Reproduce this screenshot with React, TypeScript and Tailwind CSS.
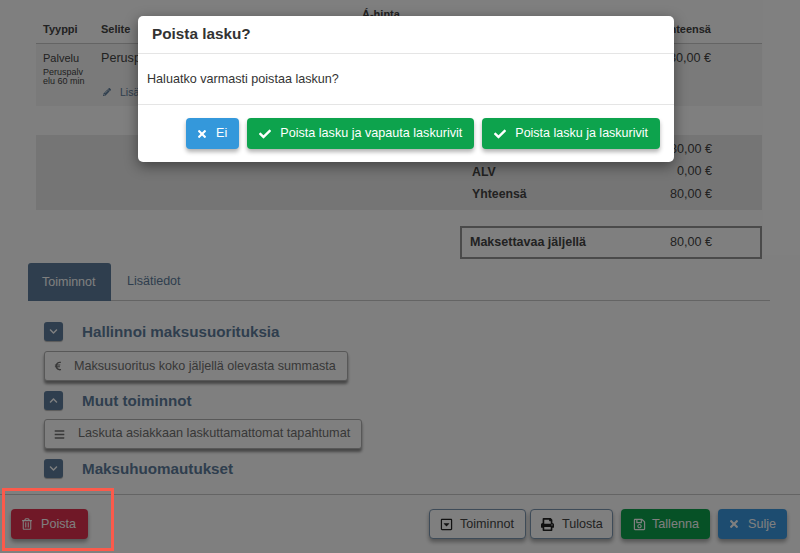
import { FaTimes, FaCheck, FaPencilAlt, FaRegTrashAlt, FaRegSave, FaPrint, FaEuroSign, FaBars, FaChevronDown, FaChevronUp, FaRegCaretSquareDown } from "react-icons/fa";
import type { ReactNode } from "react";

function Section({ icon, title }: { icon: ReactNode; title: string }) {
  return (
    <div className="flex items-center h-[19px]">
      <span className="w-[19px] h-[19px] rounded-[3px] bg-[#5e7d9c] text-white flex items-center justify-center shadow-[0_1px_1px_rgba(0,0,0,0.3)]">{icon}</span>
      <h3 className="ml-[19px] text-[#5e7d9c] text-[15.2px] font-bold leading-[19px]">{title}</h3>
    </div>
  );
}

function ActionButton({ icon, label, slot, size }: { icon: ReactNode; label: string; slot: string; size: string }) {
  return (
    <div className={`h-[30px] self-start flex items-center pl-[9px] pr-[11px] border border-[#b0b0b0] rounded-[3px] bg-white text-[#707070] shadow-[0_3px_3px_rgba(0,0,0,0.45)] ${size}`}>
      <span className={`flex justify-start ${slot}`}>{icon}</span>
      <span className="ml-[12px]">{label}</span>
    </div>
  );
}

function ModalButton({ icon, label, cls, gap, size }: { icon: ReactNode; label: string; cls: string; gap: string; size: string }) {
  return (
    <div className={`h-[31px] flex items-center px-[12px] ${gap} ${size} rounded-[4px] text-white shadow-[0_3px_4px_rgba(0,0,0,0.3)] ${cls}`}>
      {icon}
      <span>{label}</span>
    </div>
  );
}

export default function App() {
  return (
    <div className="relative w-[800px] h-[553px] overflow-hidden bg-white text-[#444] font-['Liberation_Sans',Arial,sans-serif]">
      {/* page */}
      <div className="h-full flex flex-col">
        <div className="ml-[36px] mr-[38px] shrink-0">
          <div className="h-[44px] border-b border-[#c8c8c8] flex text-[11px] font-bold">
            <span className="w-[58px] ml-[7px] mt-[22px] leading-[14px]">Tyyppi</span>
            <span className="w-[261px] mt-[22px] leading-[14px]">Selite</span>
            <span className="mt-[7px] leading-[14px]">Á-hinta</span>
            <span className="ml-auto mr-[51px] mt-[22px] leading-[14px]">Yhteensä</span>
          </div>
          <div className="h-[62px] bg-[#f4f4f4] flex">
            <div className="w-[58px] ml-[7px] pt-[7px]">
              <div className="text-[11px] leading-[14px]">Palvelu</div>
              <div className="text-[9px] leading-[9px] mt-[3px] w-[42px] break-all">Peruspalv elu 60 min</div>
            </div>
            <div className="pt-[7px]">
              <div className="text-[12.6px] leading-[15px]">Peruspalvelu</div>
              <div className="flex items-center gap-[9px] ml-[2px] mt-[20px] text-[#5e7d9c] text-[10.5px] leading-[12px]">
                <FaPencilAlt className="w-[8px] h-[8px] text-[#5e7d9c]" />
                <span>Lisää</span>
              </div>
            </div>
            <div className="ml-auto mr-[51px] pt-[7px] text-[12.6px] leading-[15px]">80,00 €</div>
          </div>
          <div className="h-[75px] mt-[29px] bg-[#eaeaea] text-[12.6px] pt-[3px]">
            {[["", "80,00 €"], ["ALV", "0,00 €"], ["Yhteensä", "80,00 €"]].map(([k, v]) => (
              <div key={v + k} className="h-[22.5px] flex items-center pl-[436px] pr-[50px] justify-between">
                <b className="font-bold text-[12.3px]">{k}</b>
                <span>{v}</span>
              </div>
            ))}
          </div>
          <div className="ml-[424px] mt-[16px] h-[33px] border-2 border-[#949494] flex items-center justify-between pl-[8px] pr-[48px] text-[12.6px]">
            <b className="text-[12.5px]">Maksettavaa jäljellä</b>
            <span>80,00 €</span>
          </div>
        </div>

        <div className="ml-[28px] mr-[30px] mt-[4px] h-[38px] border-b border-[#c8c8c8] flex text-[12.5px] shrink-0">
          <div className="w-[83px] h-[38px] bg-[#5e7d9c] text-white rounded-t-[3px] flex items-center pl-[14px]">Toiminnot</div>
          <div className="ml-[16px] h-[37px] flex items-center text-[#5e7d9c]">Lisätiedot</div>
        </div>

        <div className="ml-[44px] mt-[21px] flex flex-col shrink-0">
          <Section icon={<FaChevronDown className="w-[9px] h-[9px]" />} title="Hallinnoi maksusuorituksia" />
          <div className="mt-[10px] mb-[10px] flex flex-col">
            <ActionButton slot="w-[8px]" size="text-[12.6px]" icon={<FaEuroSign className="w-[8px] h-[10px] text-[#707070]" />} label="Maksusuoritus koko jäljellä olevasta summasta" />
          </div>
          <Section icon={<FaChevronUp className="w-[9px] h-[9px]" />} title="Muut toiminnot" />
          <div className="mt-[9px] mb-[10px] flex flex-col">
            <ActionButton slot="w-[12px]" size="text-[12.7px]" icon={<FaBars className="w-[11px] h-[11px] text-[#707070]" />} label="Laskuta asiakkaan laskuttamattomat tapahtumat" />
          </div>
          <Section icon={<FaChevronDown className="w-[9px] h-[9px]" />} title="Maksuhuomautukset" />
        </div>

        <div className="mt-auto h-[59px] border-t border-[#c8c8c8] flex items-start pt-[14px] pl-[11px] pr-[13px] text-[12.6px] shrink-0">
          <div className="w-[77px] h-[30px] rounded-[4px] bg-[#e0314e] text-white flex items-center pl-[11px] gap-[9px] shadow-[0_3px_4px_rgba(0,0,0,0.35)]">
            <FaRegTrashAlt className="w-[10px] h-[12px]" />
            <span>Poista</span>
          </div>
          <div className="ml-auto w-[97px] h-[30px] rounded-[4px] border border-[#7d97b0] bg-white text-[#444] flex items-center pl-[10px] gap-[7px] shadow-[0_3px_4px_rgba(0,0,0,0.35)]">
            <FaRegCaretSquareDown className="w-[13px] h-[13px] text-[#222]" />
            <span>Toiminnot</span>
          </div>
          <div className="ml-[4px] w-[83px] h-[30px] rounded-[4px] border border-[#7d97b0] bg-white text-[#444] flex items-center pl-[10px] gap-[8px] shadow-[0_3px_4px_rgba(0,0,0,0.35)]">
            <FaPrint className="w-[13px] h-[13px] text-[#222]" />
            <span>Tulosta</span>
          </div>
          <div className="ml-[8px] w-[89px] h-[30px] rounded-[4px] bg-[#0da34d] text-white flex items-center pl-[12px] gap-[6px] shadow-[0_3px_4px_rgba(0,0,0,0.35)]">
            <FaRegSave className="w-[13px] h-[13px]" />
            <span>Tallenna</span>
          </div>
          <div className="ml-[8px] w-[69px] h-[30px] rounded-[4px] bg-[#3b99e0] text-white flex items-center pl-[12px] gap-[10px] shadow-[0_3px_4px_rgba(0,0,0,0.35)]">
            <FaTimes className="w-[8px] h-[12px]" />
            <span>Sulje</span>
          </div>
        </div>
      </div>

      {/* backdrop */}
      <div className="absolute inset-0 bg-black/50" />

      {/* modal */}
      <div className="absolute left-[138px] top-[16px] w-[536px] h-[146px] bg-white rounded-[5px] shadow-[0_4px_14px_rgba(0,0,0,0.45)] flex flex-col">
        <div className="h-[38px] border-b border-[#e5e5e5] flex items-center pl-[14px] text-[#333] text-[15.3px] font-bold shrink-0">Poista lasku?</div>
        <div className="h-[51px] border-b border-[#e5e5e5] flex items-center pl-[9px] text-[12.6px] text-[#333] shrink-0">Haluatko varmasti poistaa laskun?</div>
        <div className="flex-1 flex items-start justify-end gap-[8px] pt-[13px] pr-[14px]">
          <ModalButton size="text-[12.6px]" icon={<FaTimes className="w-[8px] h-[12px]" />} label="Ei" cls="bg-[#3498db]" gap="gap-[10px]" />
          <ModalButton size="text-[12.6px]" icon={<FaCheck className="w-[12px] h-[12px]" />} label="Poista lasku ja vapauta laskurivit" cls="bg-[#0da34d]" gap="gap-[9px]" />
          <ModalButton size="text-[12.5px]" icon={<FaCheck className="w-[12px] h-[12px]" />} label="Poista lasku ja laskurivit" cls="bg-[#0da34d]" gap="gap-[9px]" />
        </div>
      </div>

      {/* annotation */}
      <div className="absolute left-[2px] top-[488px] w-[112px] h-[63px] border-[3px] border-[#fb5a4b]" />
    </div>
  );
}
